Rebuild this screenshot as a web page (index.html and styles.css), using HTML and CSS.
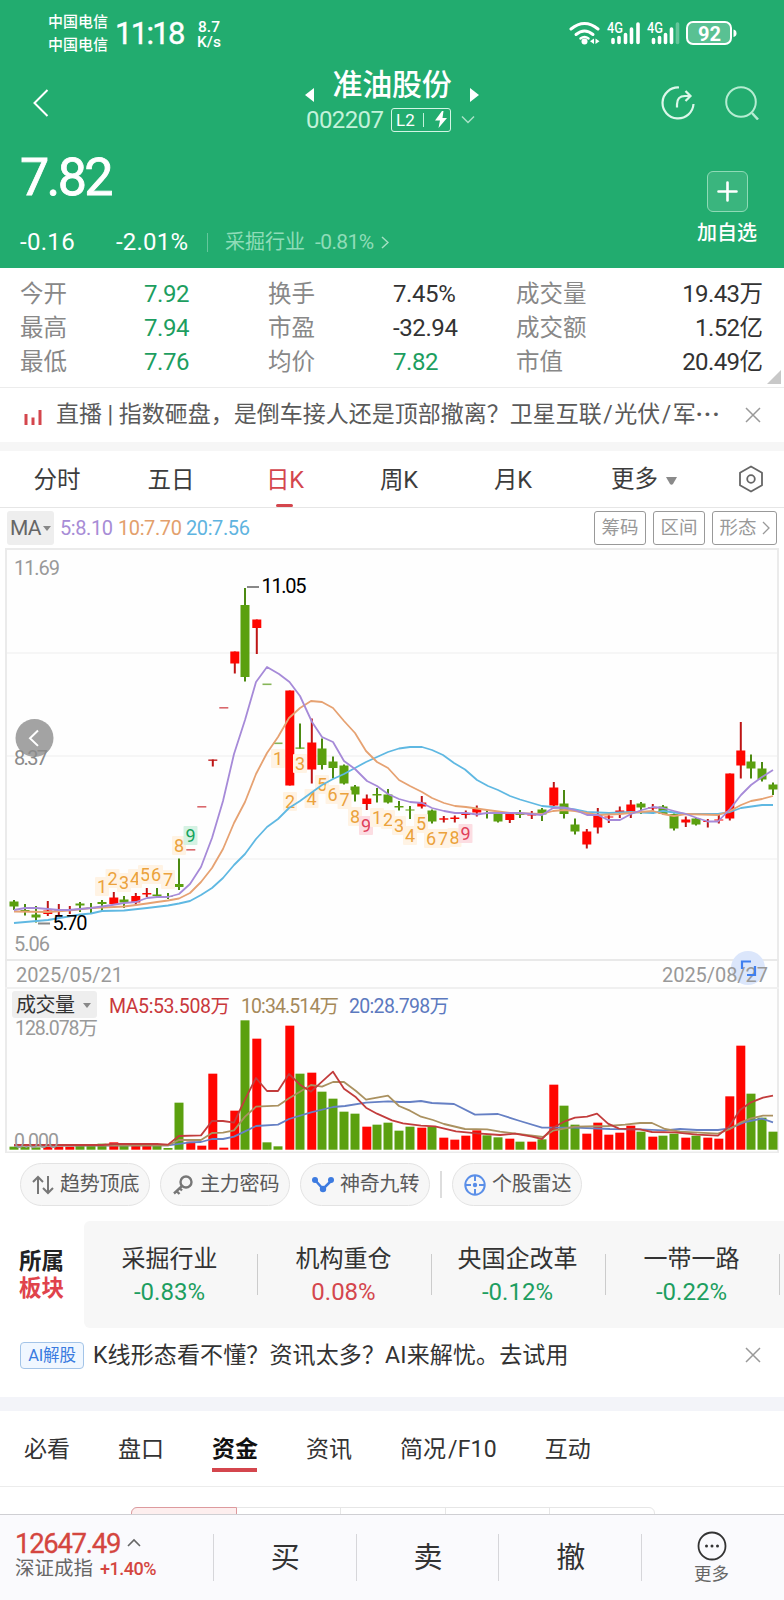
FILE: index.html
```html
<!DOCTYPE html>
<html lang="zh-CN">
<head>
<meta charset="utf-8">
<title>准油股份 002207</title>
<link rel="stylesheet" href="styles.css">
</head>
<body>
<div class="app">
  <header class="header">
    <div class="status">
      <div class="carriers"><span>中国电信</span><span>中国电信</span></div>
      <div class="clock">11:18</div>
      <div class="speed"><span>8.7</span><span>K/s</span></div>
      <svg class="status-icons" width="172" height="30" viewBox="568 18 172 30" fill="#fff">
        <g fill="none" stroke="#fff" stroke-width="3" stroke-linecap="round"><path d="M571 29Q584.500 18 598 29"/><path d="M576 34.500Q584.500 27.500 593 34.500"/><path d="M580.500 38.500Q584.500 35.500 588.500 38.500" stroke-width="2.500"/></g>
        <circle cx="584.500" cy="41.500" r="3"/><path d="M594 38.500V44L590 41.200ZM595.500 38.500V44L599.500 41.200Z"/>
        <text x="607" y="33" font-size="14.500" textLength="16" lengthAdjust="spacingAndGlyphs">4G</text>
        <g stroke="#fff" stroke-width="3.600" stroke-linecap="round"><path d="M613 39.500v3M619 37.500v5M625.500 34.500v8M631.500 29v13.500M638 24v18.500"/><path d="M653.500 39.500v3M659.500 37.500v5M665.500 34.500v8M671.500 29v13.500"/><path d="M677.500 24v18.500" opacity=".3"/></g>
        <text x="647" y="33" font-size="14.500" textLength="16" lengthAdjust="spacingAndGlyphs">4G</text>
        <rect x="687" y="22" width="44" height="22" rx="6" fill="#fff" fill-opacity=".25" stroke="#fff" stroke-width="2"/><path d="M733.500 29.500q3 .5 3 3.700t-3 3.700Z"/>
        <text x="698" y="41" font-size="21" font-weight="700" textLength="23" lengthAdjust="spacingAndGlyphs">92</text>
      </svg>
    </div>
    <div class="nav">
      <svg width="18" height="30" viewBox="0 0 18 30" fill="none" stroke="#fff" stroke-width="2"><path d="M15.500 2 2.500 15l13 13"/></svg>
      <div class="title">
        <div class="title-row">
          <svg width="9" height="14" viewBox="0 0 9 14"><path d="M9 0v14L0 7Z" fill="#fff"/></svg>
          <h1>准油股份</h1>
          <svg width="9" height="14" viewBox="0 0 9 14"><path d="M0 0v14l9-7Z" fill="#fff"/></svg>
        </div>
        <div class="code-row">
          <span class="code">002207</span>
          <span class="level"><span>L2</span><i></i><svg width="14" height="17" viewBox="0 0 14 17"><path d="M8 0 1 9.500h5L4.500 17 13 7H8.500L9.500 0Z" fill="#fff"/></svg></span>
          <svg width="14" height="9" viewBox="0 0 14 9" fill="none" stroke="#a9e2c7" stroke-width="1.500"><path d="m1 1.500 6 6 6-6"/></svg>
        </div>
      </div>
      <div class="nav-actions">
        <svg width="34" height="34" viewBox="0 0 34 34" fill="none" stroke="#dcf7ea" stroke-width="2.200"><path d="M18 1.500A15.500 15.500 0 1 0 32.500 18"/><path d="M16 21.500v-3Q16 10 24 10h5.500M24.500 5l5 5-5 5"/></svg>
        <svg width="34" height="34" viewBox="0 0 34 34" fill="none" stroke="#b5edd2" stroke-width="2"><circle cx="16" cy="16" r="14.800"/><path d="m27 27 6 6.500" stroke-width="2.500"/></svg>
      </div>
    </div>
    <div class="price">7.82</div>
    <div class="change">
      <span class="diff">-0.16</span><span class="pct">-2.01%</span><i></i><span class="industry">采掘行业</span><span class="industry-pct">-0.81%</span>
      <svg width="8" height="13" viewBox="0 0 8 13" fill="none" stroke="#a4e0c4" stroke-width="1.500"><path d="m1 1 6 5.500-6 5.500"/></svg>
    </div>
    <div class="add">
      <div class="add-box"><svg width="21" height="21" viewBox="0 0 21 21" stroke="#fff" stroke-width="2.600" stroke-linecap="round"><path d="M10.500 1.500v18M1.500 10.500h18"/></svg></div>
      <span>加自选</span>
    </div>
  </header>

  <section class="stats">
    <span>今开</span><b class="down">7.92</b><span>换手</span><b>7.45%</b><span>成交量</span><b class="end">19.43<em>万</em></b>
    <span>最高</span><b class="down">7.94</b><span>市盈</span><b>-32.94</b><span>成交额</span><b class="end">1.52<em>亿</em></b>
    <span>最低</span><b class="down">7.76</b><span>均价</span><b class="down">7.82</b><span>市值</span><b class="end">20.49<em>亿</em></b>
    <i class="corner"></i>
  </section>

  <section class="news">
    <svg width="18" height="15" viewBox="0 0 18 15" stroke="#d4464d" stroke-width="3"><path d="M2 4v11M9 7.500V15M16 0v15"/></svg>
    <p>直播<span class="bar">|</span>指数砸盘，是倒车接人还是顶部撤离？卫星互联<span class="slash">/</span>光伏<span class="slash">/</span>军<span class="dots">···</span></p>
    <svg width="16" height="16" viewBox="0 0 16 16" stroke="#999" stroke-width="1.500"><path d="m1 1 14 14M15 1 1 15"/></svg>
  </section>

  <nav class="periods">
    <span>分时</span><span>五日</span><span class="on">日K</span><span>周K</span><span>月K</span>
    <span class="more">更多<svg width="11" height="8" viewBox="0 0 11 8"><path d="M0 0h11L7 7q-1.500 1.500-3 0Z" fill="#8a8a8a"/></svg></span>
    <svg class="gear" width="26" height="28" viewBox="0 0 26 28" fill="none" stroke="#666" stroke-width="1.800"><path d="M13 1.500 24 7.700V20.300L13 26.500 2 20.300V7.700Z" stroke-linejoin="round"/><circle cx="13" cy="14" r="3.800"/></svg>
  </nav>

  <section class="ma-row">
    <span class="ma-pick">MA<svg width="8" height="5" viewBox="0 0 8 5"><path d="M0 0h8L4 5Z" fill="#888"/></svg></span>
    <span class="ma5">5:8.10</span><span class="ma10">10:7.70</span><span class="ma20">20:7.56</span>
    <div class="tools"><span>筹码</span><span>区间</span><span>形态<svg width="8" height="14" viewBox="0 0 8 14" fill="none" stroke="#999" stroke-width="1.300"><path d="m1 1 6 6-6 6"/></svg></span></div>
  </section>

  <svg class="chart" id="chart" width="784" height="608" viewBox="0 548 784 608"></svg>

  <section class="chips">
    <span class="chip"><svg width="22" height="20" viewBox="0 0 22 20" fill="none" stroke="#777" stroke-width="2"><path d="M6 19V2M1 7l5-5 5 5M16 1v17M11 13l5 5 5-5"/></svg>趋势顶底</span>
    <span class="chip"><svg width="22" height="20" viewBox="0 0 22 20" fill="none" stroke="#777" stroke-width="2.400"><circle cx="14" cy="7" r="5.500"/><path d="M10 11 2 18.500M4.500 16l3 3M7.500 13l2.500 2.500"/></svg>主力密码</span>
    <span class="chip"><svg width="22" height="20" viewBox="0 0 22 20"><path d="m3 5 8 9 8-8" fill="none" stroke="#3d7be0" stroke-width="2.500"/><g fill="#3d7be0"><circle cx="3" cy="5" r="3"/><circle cx="11" cy="14" r="3.200"/><circle cx="19" cy="5" r="3"/></g></svg>神奇九转</span>
    <i></i>
    <span class="chip"><svg width="22" height="22" viewBox="0 0 22 22" fill="none" stroke="#5b8fe8" stroke-width="2"><circle cx="11" cy="11" r="9.700"/><path d="M11 1v6M11 15v6M1 11h6M15 11h6"/><circle cx="11" cy="11" r="1.200" fill="#3d7be0"/></svg>个股雷达</span>
  </section>

  <section class="sectors">
    <div class="sector-title"><span>所属</span><span class="red">板块</span></div>
    <div class="sector-list">
      <div class="sector"><span>采掘行业</span><b class="down">-0.83%</b></div>
      <div class="sector"><span>机构重仓</span><b class="up">0.08%</b></div>
      <div class="sector"><span>央国企改革</span><b class="down">-0.12%</b></div>
      <div class="sector"><span>一带一路</span><b class="down">-0.22%</b></div>
    </div>
  </section>

  <section class="ai">
    <span class="ai-tag">AI解股</span>
    <p>K线形态看不懂？资讯太多？AI来解忧。去试用</p>
    <svg width="16" height="16" viewBox="0 0 16 16" stroke="#999" stroke-width="1.500"><path d="m1 1 14 14M15 1 1 15"/></svg>
  </section>

  <nav class="tabs">
    <span>必看</span><span>盘口</span><span class="on">资金</span><span>资讯</span><span>简况<em>/F10</em></span><span>互动</span>
  </nav>
  <div class="segment-wrap"><div class="segment"><i class="on"></i><i></i><i></i><i></i><i></i></div></div>

  <footer class="bottom">
    <div class="index">
      <div class="index-value">12647.49<svg width="14" height="9" viewBox="0 0 14 9" fill="none" stroke="#666" stroke-width="1.600"><path d="m1 8 6-6 6 6"/></svg></div>
      <div class="index-name">深证成指<span>+1.40%</span></div>
    </div>
    <span class="act">买</span><span class="act">卖</span><span class="act">撤</span>
    <div class="act act-more">
      <svg width="30" height="30" viewBox="0 0 30 30"><circle cx="15" cy="15" r="13.500" fill="none" stroke="#333" stroke-width="1.800"/><g fill="#333"><circle cx="9.500" cy="15" r="1.500"/><circle cx="15" cy="15" r="1.500"/><circle cx="20.500" cy="15" r="1.500"/></g></svg>
      <span>更多</span>
    </div>
  </footer>
</div>
<script src="chart.js"></script>
</body>
</html>
```

FILE: styles.css
```css
* { box-sizing: border-box; }
body { margin: 0; background: #fff; }
i, em { font-style: normal; }
p, h1 { margin: 0; }
svg { display: block; flex: none; }

.app {
  width: 784px;
  height: 1600px;
  overflow: hidden;
  font-family: Roboto, "Noto Sans CJK SC", sans-serif;
  color: #333;
  display: flex;
  flex-direction: column;
}
.app > * { flex: none; }
.down { color: #1d9e60; }
.up { color: #d4464d; }

/* header */
.header { position: relative; height: 268px; background: #22ac6f; color: #fff; }
.status { height: 66px; display: flex; align-items: center; padding-left: 48px; }
.carriers { display: flex; flex-direction: column; font-size: 15px; line-height: 23px; width: 60px; margin-top: 1px; font-weight: 500; }
.clock { font-size: 31px; letter-spacing: -1.7px; margin-left: 7px; width: 81px; -webkit-text-stroke: .4px #fff; }
.speed { display: flex; flex-direction: column; font-size: 15.5px; line-height: 14.5px; font-weight: 500; width: 30px; align-items: center; margin: 3px 0 0 -2px; }
.status-icons { margin-left: 344px; font-family: Roboto, sans-serif; font-weight: 500; }
.nav { height: 70px; display: flex; justify-content: space-between; align-items: flex-start; padding: 0 25px 0 32px; }
.nav > svg { margin-top: 22px; }
.title { position: absolute; top: 66px; left: 300px; width: 184px; }
.title-row { display: flex; align-items: center; justify-content: center; height: 37px; gap: 19px; }
.title-row svg { margin-top: 20px; }
.title h1 { font-size: 30px; font-weight: 500; line-height: 37px; letter-spacing: -.3px; }
.code-row { display: flex; align-items: center; height: 33px; padding-left: 6px; }
.code { font-size: 24px; letter-spacing: -.6px; color: #c3f2da; width: 85px; padding-top: 1px; }
.level { width: 60px; height: 24px; border: 1px solid #d3f5e4; border-radius: 3px; display: flex; align-items: center; font-size: 17px; padding-left: 4px; letter-spacing: 0; }
.level i { width: 1px; height: 14px; background: #c3f2da; margin: 0 10px 0 8px; }
.code-row > svg { margin-left: 10px; }
.nav-actions { display: flex; gap: 30px; padding-top: 20px; }
.price { font-size: 52px; letter-spacing: -2.6px; line-height: 60px; padding-left: 20px; margin-top: 12px; -webkit-text-stroke: .8px #fff; }
.change { display: flex; align-items: center; height: 34px; padding-left: 20px; margin-top: 17px; font-size: 24px; }
.diff { width: 96px; letter-spacing: .3px; }
.pct { width: 91px; letter-spacing: .2px; }
.change i { width: 1px; height: 19px; background: #64c79c; }
.industry { font-size: 20px; line-height: 30px; color: #8fdcb8; margin: -1px 0 0 17px; width: 90px; }
.industry-pct { font-size: 21px; letter-spacing: -.6px; color: #8fdcb8; width: 66px; }
.add { position: absolute; left: 696px; top: 171px; width: 62px; display: flex; flex-direction: column; align-items: center; font-size: 20px; line-height: 30px; }
.add span { margin-top: 6px; font-weight: 500; }
.add-box { width: 41px; height: 41px; border: 1px solid #8fdab6; border-radius: 6px; background: #3ab57e; display: grid; place-items: center; }

/* quote figures */
.stats {
  position: relative;
  height: 120px;
  border-bottom: 1px solid #ececec;
  padding: 10px 21px 0 20px;
  display: grid;
  grid-template-columns: 124px 124px 125px 123px 80px 1fr;
  grid-auto-rows: 33.7px;
  align-items: center;
  font-size: 23.5px;
  line-height: 33px;
}
.stats span { color: #888; }
.stats b { font-weight: 400; font-size: 24px; letter-spacing: -.4px; }
.stats .end { text-align: right; letter-spacing: -.6px; }
.stats em { font-size: 23.5px; letter-spacing: 0; }
.corner { position: absolute; right: 3px; bottom: 3px; border-left: 14px solid transparent; border-bottom: 14px solid #c8c8c8; }

.news { height: 63px; border-bottom: 9px solid #f6f6f6; display: flex; align-items: center; padding: 0 23px 0 24px; }
.news svg:first-child { margin-top: 4px; }
.news p { flex: 1; margin-left: 14px; margin-top: 0; font-size: 23px; line-height: 34px; color: #5a5a5a; white-space: nowrap; }
.news .bar { margin: 0 5.5px; }
.news .slash { margin: 0 1.5px; }
.news .dots { letter-spacing: 1.5px; margin-left: 0; font-weight: 700; }

.periods { height: 57px; border-bottom: 1px solid #e6e6e6; display: flex; font-size: 23.5px; line-height: 58px; color: #3c3c3c; }
.periods span { width: 114px; height: 56px; text-align: center; position: relative; }
.periods .on { color: #d4464d; }
.periods .on::after { content: ""; position: absolute; left: 48px; bottom: 0; width: 17px; height: 3px; border-radius: 2px; background: #d4464d; }
.periods .more { width: 107px; display: flex; align-items: center; justify-content: flex-end; gap: 8px; }
.periods .more svg { margin-top: 3px; }
.periods .gear { margin: 14px 0 0 61px; }

.ma-row { height: 40px; display: flex; align-items: center; padding: 0 7px; font-size: 20px; letter-spacing: -.4px; }
.ma-pick { width: 47px; height: 34px; background: #eee; border-radius: 3px; display: flex; align-items: center; gap: 2px; padding-left: 3px; font-size: 21px; color: #666; letter-spacing: -.8px; margin-right: 6px; }
.ma5 { color: #a78cd6; width: 58px; }
.ma10 { color: #e3a06c; width: 68px; }
.ma20 { color: #5fb4e0; }
.tools { margin-left: auto; display: flex; gap: 7px; }
.tools span { width: 52px; height: 34px; border: 1px solid #999; border-radius: 3px; color: #999; font-size: 18.5px; line-height: 30px; display: flex; justify-content: center; align-items: center; gap: 5px; letter-spacing: 0; }
.tools span:last-child { width: 65px; }

.chart { font-family: Roboto, "Noto Sans CJK SC", sans-serif; }

.chips { height: 65px; padding: 7px 20px 0; display: flex; gap: 10px; }
.chip { width: 130px; height: 43px; border: 1px solid #e3e3e3; border-radius: 22px; background: #f7f7f7; display: flex; align-items: center; gap: 6px; padding-left: 11px; font-size: 20px; line-height: 36px; padding-bottom: 2px; color: #5a5a5a; letter-spacing: -.2px; }
.chip svg { margin-top: 3px; }
.chips i { width: 2px; height: 27px; background: #ddd; margin: 8px 0 0; }

.sectors { height: 107px; display: flex; font-size: 24px; }
.sector-title { width: 84px; padding: 27px 0 0 19px; display: flex; flex-direction: column; font-size: 22.5px; line-height: 27px; font-weight: 700; color: #222; }
.sector-title .red { color: #e0434b; }
.sector-list { flex: 1; display: flex; background: #f7f7f7; border-radius: 6px 0 0 6px; overflow: hidden; }
.sector { width: 174px; flex: none; height: 100%; display: flex; flex-direction: column; align-items: center; padding: 22px 3px 0 0; position: relative; line-height: 33px; }
.sector::after { content: ""; position: absolute; right: 0; top: 33px; width: 1px; height: 41px; background: #ccc; }
.sector b { font-weight: 400; font-size: 24px; }

.ai { height: 83px; border-bottom: 14px solid #f3f4f9; padding: 0 23px 15px 20px; display: flex; align-items: center; }
.ai-tag { width: 64px; height: 27px; border: 1px solid #a3c4e8; border-radius: 4px; background: #f0f7ff; color: #3a7be0; font-size: 16.5px; line-height: 26px; text-align: center; white-space: nowrap; letter-spacing: -.2px; }
.ai p { flex: 1; margin-left: 9px; font-size: 23px; line-height: 34px; white-space: nowrap; letter-spacing: .13px; margin-top: 1px; }

.tabs { height: 76px; border-bottom: 1px solid #ececec; padding-left: 24px; display: flex; gap: 48px; font-size: 23px; line-height: 78px; color: #333; }
.tabs span { position: relative; white-space: nowrap; }
.tabs .on { font-weight: 700; color: #111; }
.tabs .on::after { content: ""; position: absolute; left: 0; top: 57px; width: 45px; height: 4px; background: #d4464d; }
.tabs em { letter-spacing: .2px; margin-left: 2px; }
.segment-wrap { height: 27px; overflow: hidden; padding: 20px 0 0 131px; }
.segment { width: 524px; height: 30px; border: 1px solid #e6e6e6; border-radius: 6px; display: flex; }
.segment i { flex: 1; border-right: 1px solid #e6e6e6; }
.segment i:last-child { border-right: 0; }
.segment .on { background: #fdeeee; border: 1px solid #dd9a9e; margin: -1px 0 0 -1px; border-radius: 6px 0 0 0; }

.bottom { height: 86px; border-top: 1px solid #cfcfd3; background: #fafafd; display: flex; }
.index { width: 213px; padding: 13px 0 0 15px; }
.index-value { display: flex; align-items: center; gap: 7px; font-size: 27.5px; line-height: 32px; letter-spacing: -1.3px; color: #d4463f; -webkit-text-stroke: .3px #d4463f; }
.index-value svg { margin-top: -4px; }
.index-name { display: flex; align-items: center; gap: 7px; font-size: 19.5px; line-height: 20px; color: #666; margin-top: -1px; }
.index-name span { font-size: 18px; color: #d4463f; letter-spacing: -.5px; font-weight: 500; }
.act { width: 143px; position: relative; text-align: center; font-size: 29px; line-height: 86px; padding-left: 2px; }
.act::before { content: ""; position: absolute; left: 0; top: 19px; width: 1px; height: 47px; background: #d6d6da; }
.act-more { display: flex; flex-direction: column; align-items: center; padding: 16px 2px 0 0; font-size: 17.5px; line-height: 27px; color: #666; }
```

FILE: chart.js
```javascript
const RED = '#ff0500', GREEN = '#5ba00f';
const x = i => 14 + i * 11;
let out = '';
const line = (x1, y1, x2, y2, c, w) => { out += `<line x1="${x1}" y1="${y1}" x2="${x2}" y2="${y2}" stroke="${c}" stroke-width="${w}"/>`; };
const rect = (X, y, w, h, c, r = 0) => { out += `<rect x="${X}" y="${y}" width="${w}" height="${h}" fill="${c}" rx="${r}"/>`; };
const text = (X, y, s, size, c, len) => { out += `<text x="${X}" y="${y}" font-size="${size}" fill="${c}" textLength="${len}">${s}</text>`; };
const poly = (pts, c, w = 1.8) => { out += `<polyline points="${pts}" fill="none" stroke="${c}" stroke-width="${w}" stroke-linejoin="round"/>`; };

// frame and grid
rect(5, 548, 774, 605, '#ebebeb');
rect(7, 550, 770, 601.5, '#fefefe');
[653, 756, 859].forEach(y => line(7, y, 777, y, '#f3f3f3', 1.6));
line(5, 960, 779, 960, '#e9e9e9', 2);
line(5, 988, 779, 988, '#f0f0f0', 2);
text(14, 574.5, '11.69', 20, '#999', 46);

// wick top, body top, body bottom, wick bottom, direction
const candles = [
  [900,901.5,906.5,910,0],[904,910,911,915.5,0],[906,914.5,917.5,922.5,0],[901,910.5,914,916,1],[904,909.5,910.5,915,1],
  [906,910,911,914,1],[902,903.5,905.5,912,0],[903,907.5,908.5,913,0],[900,902,904,911,0],[892,897.5,904,905,1],
  [896,899.5,902.5,908,0],[893,896,902.5,905,1],[888,893,894.5,897,1],[888,894.5,896,898,0],[893,896,897,899,0],
  [858.5,884,887,890,0],[849,849,850.3,850,1],[806,806,807.3,807,1],[759.5,759.5,760.8,766.5,1],[707,707,708.3,708,1],
  [651.5,651.5,663.5,673.5,1],[588,605,677,681.5,0],[619.5,619.5,628,654,1],[683.5,683.5,684.7,684,0],[742.5,742.5,743.7,743,0],
  [690.5,690.5,785.5,785.5,1],[723.5,747.5,748.7,748.5,0],[718.5,742.5,769.5,783.5,1],[738.5,748.5,765,769.5,0],[756.5,761.5,768,778.5,0],
  [764.5,765.5,783.5,784.5,0],[785,786.5,794.5,801.5,0],[794.5,798.5,804,810,1],[788,794,795.5,802.5,0],[789,794.5,802.5,803.5,0],
  [801,806,807.5,810.5,0],[806,809.5,810.5,819,0],[796,802.5,806.5,808.5,1],[809.5,810.5,821.5,823.5,0],[816,818.3,819.7,822.5,1],
  [815.5,817.5,819,822.5,1],[810.5,814,815,818.5,1],[805.5,809,812.5,816.5,1],[810.5,813,814,818.5,0],[814,814,821.5,822.5,0],
  [813.5,814,820,823,1],[810,814,815,818,0],[811,814.5,815.5,819,1],[808,809.5,814.5,821,0],[782,787.5,805.5,806,1],
  [790,803.5,814,818.5,0],[818.5,824.5,831.5,834.5,0],[829,831.5,844.5,848.5,1],[808,814,827.5,833.5,1],[813.5,816.5,817.5,823,1],
  [806.5,810.5,812,818,1],[800,804.5,812,818,1],[802,803.5,807.5,814,0],[804,807,808.5,814,1],[805,806.5,814,814.5,0],
  [813.5,814,828.5,830.5,0],[816.5,819.5,822.5,827,1],[817,818.5,824.5,825.5,0],[819,821,822,827.5,1],[815,819.5,820.5,823.5,1],
  [773.5,773.5,818.5,820.5,1],[722,750.5,765.5,778.5,1],[754.5,761.5,768.5,778.5,0],[762,768.5,779.5,781.5,0],[782.5,784.5,789.5,795,0]
];
const single = [16, 17, 19, 23, 24];
// rising candles sit slightly right of the falling ones
const cx = i => x(i) + (candles[i][4] ? 0.8 : 0);
candles.forEach(([a, b, c, d, up], i) => {
  if (single.includes(i)) { rect(cx(i) - 4.5, b, 9, 1.6, up ? '#d9686c' : '#86b558'); return; }
  line(cx(i), a, cx(i), d, up ? '#bd1515' : '#4c8a12', 2);
  rect(cx(i) - 4.5, b, 9, c - b, up ? (i === 18 ? '#bd1515' : RED) : GREEN);
});

// nine-turn counters
[[102,886,1],[112.5,878,2],[124,882,3],[135,878,4],[145,874,5],[156,874,6],[168,879,7],[179,845,8],[190.5,835,9,'#14a35c','#d5f2e3'],
 [278,758,1],[290,801,2],[300,763,3],[311.5,798,4],[322,784,5],[332.5,794,6],[344.5,799,7],[355,816,8],[366,825,9,'#e0405a','#fcdde2'],
 [377,817,1],[388,819,2],[399,825,3],[410,835,4],[421,823,5],[431,838,6],[443,838,7],[454.5,837,8],[465.5,833,9,'#e0405a','#fcdde2']
].forEach(([mx, my, n, c = '#eba23c', bg = '#fff3e4']) => {
  rect(mx - 7, my - 9, 14, 19, bg, 1);
  out += `<text x="${mx}" y="${my + 6.5}" font-size="18" text-anchor="middle" fill="${c}">${n}</text>`;
});

// moving averages
poly('14,923 48,920 80,914.5 91,913.5 102,911 124,910.5 147,908 168,905.5 179,903.5 190,901 201,895 212,888 223,878 234,865 245,854 256,839 267,827 278,819 289,808 300,801 311,793 322,785 333,779 344,774 355,768 366,762 377,757 388,752 399,748.5 410,747 422,747 432,750 443,755 454,763 465,769.5 477,780 488,786 498,790 510,796 520,799.5 542,806 553,807 564,808 575,809.5 587,812 609,813 631,812 653,813 663,811 686,814 718,814 730,812 741,808 762,805 773,805', '#5fb8e2');
poly('14,911.5 48,912 69,910.5 91,908 102,907.5 114,907 124,906.5 136,905 147,903.5 157,902 168,900.5 179,898.5 190,893 201,882 212,868 223,849 234,823 245,802 256,774 267,753 278,737 289,718 300,708 311,701 322,702 333,708 344,721 355,733 366,751 377,762 388,768 399,780 410,786 422,792 432,798 444,803 455,806 466,807 487,810 510,813 542,814 553,811 564,810 575,811 598,815 620,814 640,812 653,811 663,814 674,816 686,814 718,815 730,811 741,805 751,801 762,799 773,796', '#e6a272');
poly('14,910 25,908 36,908 48,909 59,910 69,910 80,909 91,908 102,906.5 112,905 124,903 136,902 147,898 157,897 168,897 179,894 190,884 201,867 212,838 223,801 234,754 245,720 256,682 267,667 279,674 289.5,682 300,696 312,722 322,737 333,742 344,761 355,769 367,781 377,786 388,794 399,799 410,802 422,803 432,808 444,811 455,813 466,813 477,814.5 487,813 510,813 520,813 542,815 553,808 564,807.5 575,810 587,815 598,815 608,820 620,820 631,814 642,810 653,807 663,808 674,811 686,814 697,818 708,821.5 718,821.5 730,809 741,795 751,785 762,777 773,770', '#a68ad8');

// high and low marks
line(247, 587, 259, 587, '#888', 2);
text(261.5, 592.5, '11.05', 20, '#000', 45);
line(38, 923.5, 50, 923.5, '#888', 2);
text(52.5, 929.5, '5.70', 20, '#000', 35);

// back button
out += '<circle cx="34.5" cy="738" r="19" fill="#a3a3a3"/><path d="m38 730.500-8 7.700 8 7.700" fill="none" stroke="#fff" stroke-width="2"/>';
text(14, 764.5, '8.37', 20, '#8b8b8b', 34);
text(14, 950.5, '5.06', 20, '#999', 36);
text(16, 981.5, '2025/05/21', 20, '#999', 107);
out += '<circle cx="748" cy="968" r="17" fill="#dbe6fb"/>';
text(662, 981.5, '2025/08/27', 20, '#999', 106);
out += '<path d="M742 969v-7.500h9M747 975h8v-9" fill="none" stroke="#3f7ff0" stroke-width="2.200"/>';

// volume header
rect(12, 991, 85, 27, '#eee', 3);
text(16, 1012, '成交量', 20, '#333', 59);
out += '<path d="M83 1003h8l-4 5Z" fill="#888"/>';
text(109, 1013, 'MA5:53.508万', 19.5, '#c9383c', 121);
text(241, 1013, '10:34.514万', 19.5, '#a5895a', 98);
text(349, 1013, '20:28.798万', 19.5, '#5c79bf', 100);
text(15, 1035, '128.078万', 19.5, '#999', 83);

// volume bars: distance of each top below y=960, in thirds of a pixel
const vol = [560,561,562,560,560,560,558,557,551,547,557,557,557,557,564,428,545,557,341,563,452,181,236,547,559,197,341,338,395,416,455,461,500,494,488,512,500,503,499,533,539,527,511,526,532,536,545,545,538,374,437,494,521,488,524,518,497,515,530,527,521,533,527,533,536,409,257,401,473,515];
const green = [26, 37];
vol.forEach((v, i) => {
  const y = 960 + v / 3;
  rect(cx(i) - 4.5, y, 9, 1149.7 - y, candles[i][4] ? RED : GREEN);
});
const vline = (pts, c) => poly(pts.map(([a, b]) => `${a},${960 + b / 3}`).join(' '), c);
vline([[14,557],[168,556],[190,547],[201,546],[212,537],[223,537],[234,530],[245,514],[256,498],[278,494],[289,477],[311,457],[333,441],[345,438],[366,428],[388,424],[400,426],[410,426],[421,423],[432,429],[454,432],[475,464],[498,462],[520,483],[542,503],[575,503],[610,507],[640,508],[664,511],[680,507],[697,510],[718,510],[730,505],[745,486],[762,476],[773,487]], '#6680c4');
vline([[14,557],[168,556],[179,540],[201,540],[212,519],[223,518],[234,511],[245,470],[256,440],[278,437],[289,415],[300,395],[311,375],[322,380],[333,366],[344,366],[356,393],[366,419],[388,407],[399,438],[410,452],[421,470],[433,480],[444,492],[465,507],[487,508],[500,515],[543,531],[553,512],[575,500],[608,498],[625,494],[640,489],[652,489],[665,507],[680,515],[718,521],[730,507],[741,487],[751,475],[763,467],[773,467]], '#aa9160');
vline([[14,555],[102,555],[114,552],[157,552],[168,554],[179,528],[201,526],[212,483],[223,483],[234,488],[245,418],[256,354],[267,393],[278,393],[289,342],[300,374],[311,395],[322,365],[333,335],[344,386],[356,412],[366,443],[377,461],[392,481],[403,490],[421,497],[435,499],[456,514],[477,520],[500,525],[515,521],[532,530],[542,537],[553,503],[564,485],[575,473],[587,470],[597,461],[608,491],[619,506],[640,508],[652,516],[675,517],[697,524],[718,527],[729,500],[740,450],[751,427],[763,413],[773,407]], '#c23c3c');
text(14, 1148, '0.000', 19.5, '#999', 45);

document.getElementById('chart').innerHTML = out;
```
